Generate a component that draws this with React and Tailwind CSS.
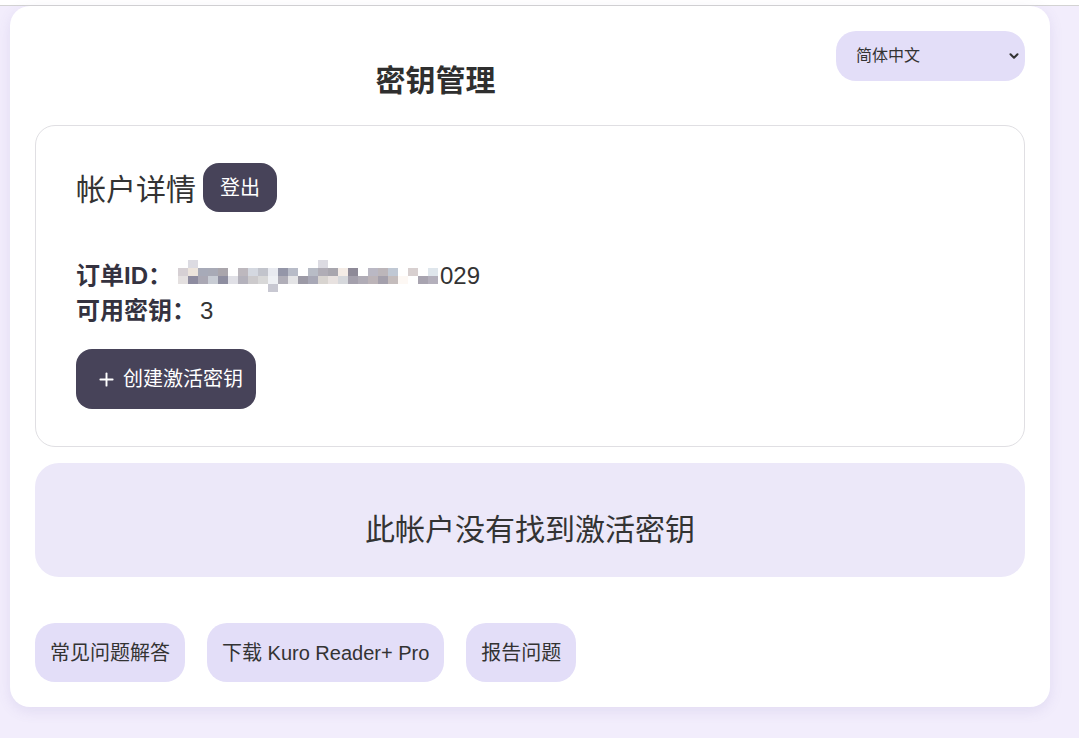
import { Plus, ChevronDown } from 'lucide-react';

const font = { fontFamily: '"Liberation Sans", "Noto Sans CJK SC", sans-serif' };

// pixelated (redacted) order id
const redactRows = [
  Array.from({ length: 26 }, (_, i) => (i === 1 || i === 14 ? '#dcdbe2' : 'transparent')),
  ['#d6d0d4', '#ece4dc', '#a7aab8', '#a8aab6', '#aaa6ac', '#fff', '#bdb8be', '#d4d8e0', '#c2c4cc', '#e8eaf0', '#9496a8', '#b8bcc8', '#fff', '#b8bcc6', '#b0adb6', '#a8a6ae', '#f4ece6', '#8e8a98', '#fff', '#bab8c4', '#bcb6ba', '#c0c8d4', '#fff', '#d8d0d0', '#fff', '#dfe6ec'],
  ['#e4e0e0', '#8e8ca0', '#aaa8b4', '#c8ccd4', '#8e8ea0', '#e0e0e6', '#b4b2bc', '#cccacc', '#d8d8d8', '#eef0f4', '#b0aeb8', '#e4e4e6', '#9c9aa6', '#a8a8b6', '#d8d4d0', '#e8e2e0', '#d6d8dc', '#a4a0ac', '#b0acb6', '#bcb4b8', '#a4a0ac', '#c4bcbc', '#fdf8f4', '#fff', '#a8a4b0', '#b4b0bc'],
  Array.from({ length: 26 }, (_, i) => (i === 9 ? '#c8c8d2' : 'transparent')),
];

function Redacted() {
  return (
    <span className="inline-flex flex-col align-middle ml-[6px] mr-[2px]">
      {redactRows.map((row, r) => (
        <span key={r} className="flex">
          {row.map((c, i) => (
            <span key={i} className="w-[10px] h-[8px]" style={{ background: c }} />
          ))}
        </span>
      ))}
    </span>
  );
}

export default function App() {
  return (
    <div className="min-h-[738px] bg-[#f2edfc]" style={font}>
      <div className="h-[6px] bg-white border-b border-[#d3d3d3]" />
      <div className="pl-[10px] pr-[29px] pb-[31px]">
        <div className="bg-white rounded-[20px] p-[25px] shadow-[0_4px_14px_rgba(110,90,170,0.12)]">
          {/* Header */}
          <div className="flex items-start">
            <h1 className="flex-1 text-center mt-[31px] text-[30px] leading-[38px] font-bold text-[#2f2f2f]">
              密钥管理
            </h1>
            <div className="relative w-[189px] h-[50px]">
              <select
                className="appearance-none w-full h-full rounded-[20px] bg-[#e3def8] pl-[20px] text-[16px] text-[#333] outline-none"
                style={font}
                defaultValue="zh"
              >
                <option value="zh">简体中文</option>
                <option value="en">English</option>
              </select>
              <ChevronDown
                size={14}
                strokeWidth={3.5}
                className="absolute right-[4px] top-1/2 -translate-y-1/2 text-[#333] pointer-events-none"
              />
            </div>
          </div>

          {/* Account card */}
          <div className="mt-[25px] border border-[#e0dfe3] rounded-[20px] pl-[40px] pt-[37px] pb-[37px]">
            <div className="flex items-center gap-[7px]">
              <h2 className="text-[30px] leading-[40px] text-[#333] mt-[4px]">帐户详情</h2>
              <button className="h-[49px] px-[17px] rounded-[16px] bg-[#474359] text-white text-[20px]" style={font}>
                登出
              </button>
            </div>
            <div className="mt-[46px] text-[24px] leading-[35px] text-[#333]">
              <div className="flex items-center">
                <span className="font-bold text-[#34323f]">订单ID：</span>
                <span className="flex items-center"><Redacted />029</span>
              </div>
              <div className="flex items-center">
                <span className="font-bold text-[#34323f]">可用密钥：</span>
                <span className="ml-[4px]">3</span>
              </div>
            </div>
            <button
              className="mt-[21px] h-[60px] pl-[20px] pr-[13px] rounded-[16px] bg-[#474359] text-white text-[20px] flex items-center gap-[6px]"
              style={font}
            >
              <Plus size={21} strokeWidth={2.2} />
              创建激活密钥
            </button>
          </div>

          {/* Empty state */}
          <div className="mt-[16px] h-[114px] rounded-[24px] bg-[#ece8f9] flex items-center justify-center pt-[18px]">
            <p className="text-[30px] text-[#333]">此帐户没有找到激活密钥</p>
          </div>

          {/* Footer links */}
          <div className="mt-[46px] flex gap-[22px]">
            {['常见问题解答', '下载 Kuro Reader+ Pro', '报告问题'].map((t) => (
              <button
                key={t}
                className="h-[59px] px-[15px] rounded-[20px] bg-[#e3def8] text-[20px] text-[#333]"
                style={font}
              >
                {t}
              </button>
            ))}
          </div>
        </div>
      </div>
    </div>
  );
}
